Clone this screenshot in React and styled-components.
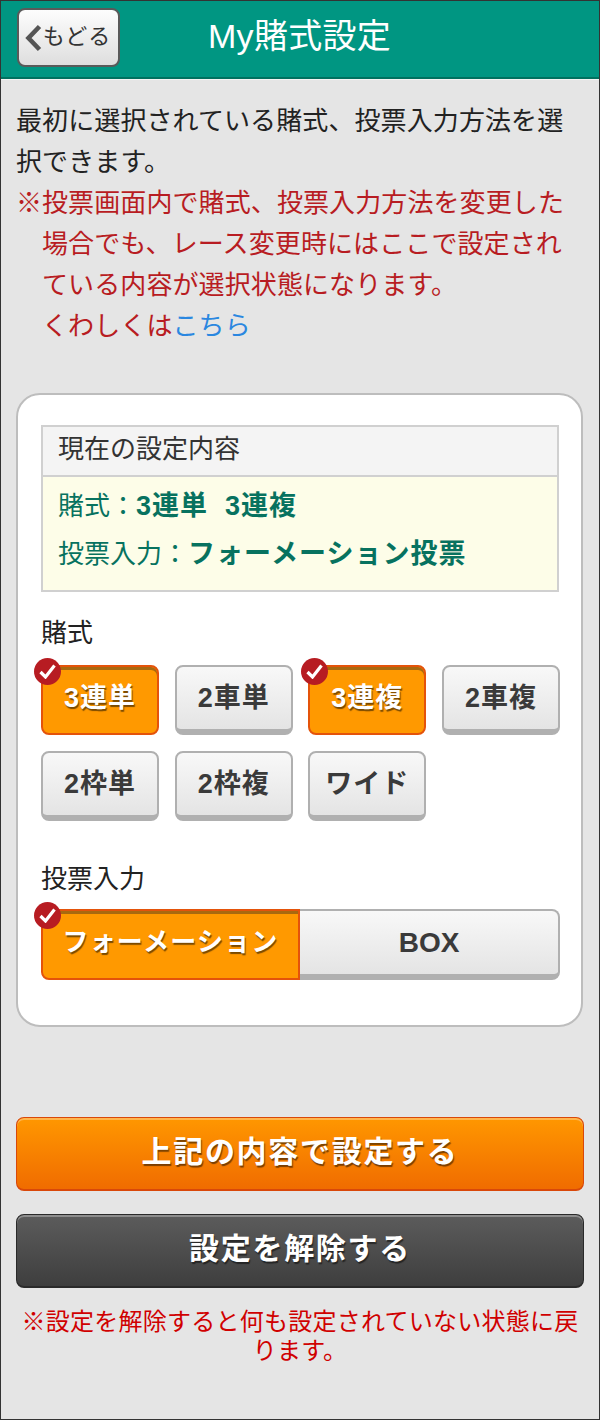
import styled, { createGlobalStyle } from "styled-components";

const GlobalStyle = createGlobalStyle`
  html, body {
    margin: 0;
    padding: 0;
    background: #e5e5e5;
  }
  * {
    box-sizing: border-box;
  }
`;

const FONT = `"Liberation Sans", "Noto Sans CJK JP", sans-serif`;

const Check = () => (
  <CheckBadge>
    <svg width="17" height="15" viewBox="0 0 17 15">
      <path d="M1.5 8 L6.5 13 L15.5 1.5" fill="none" stroke="#fff" strokeWidth="3.2" />
    </svg>
  </CheckBadge>
);

const App = () => {
  const row1 = [
    { label: "3連単", on: true },
    { label: "2車単" },
    { label: "3連複", on: true },
    { label: "2車複" },
  ];
  const row2 = [{ label: "2枠単" }, { label: "2枠複" }, { label: "ワイド" }];

  return (
    <>
      <GlobalStyle />
      <Page>
        <Header>
          <BackButton>
            <BackChevron width="18" height="28" viewBox="0 0 18 28">
              <path d="M15.5 2.5 L4.5 14 L15.5 25.5" fill="none" stroke="#555" strokeWidth="4.6" />
            </BackChevron>
            もどる
          </BackButton>
          <Title>My賭式設定</Title>
        </Header>

        <Intro>
          <Lead>最初に選択されている賭式、投票入力方法を選択できます。</Lead>
          <Warning>
            <Mark>※</Mark>
            <span>
              投票画面内で賭式、投票入力方法を変更した場合でも、レース変更時にはここで設定されている内容が選択状態になります。
              <br />
              くわしくは<MoreLink>こちら</MoreLink>
            </span>
          </Warning>
        </Intro>

        <Card>
          <Current>
            <CurrentHead>現在の設定内容</CurrentHead>
            <CurrentBody>
              <CurrentRow>
                賭式：<strong>3連単&nbsp;&nbsp;3連複</strong>
              </CurrentRow>
              <CurrentRow>
                投票入力：<strong>フォーメーション投票</strong>
              </CurrentRow>
            </CurrentBody>
          </Current>

          <SectionLabel>賭式</SectionLabel>
          <ChoiceGrid>
            {row1.concat(row2).map((item) => (
              <Choice key={item.label} $on={item.on}>
                {item.on && <Check />}
                {item.label}
              </Choice>
            ))}
          </ChoiceGrid>

          <InputLabel>投票入力</InputLabel>
          <Segment>
            <SegmentButton $on $side="left">
              <Check />
              フォーメーション
            </SegmentButton>
            <SegmentButton $side="right">BOX</SegmentButton>
          </Segment>
        </Card>

        <Actions>
          <ActionButton $kind="save">上記の内容で設定する</ActionButton>
          <ActionButton $kind="clear">設定を解除する</ActionButton>
          <Notice>※設定を解除すると何も設定されていない状態に戻ります。</Notice>
        </Actions>
      </Page>
    </>
  );
};

const Page = styled.div`
  width: 600px;
  height: 1420px;
  overflow: hidden;
  background: #e5e5e5;
  border: 1px solid #333;
  font-family: ${FONT};
  color: #333;
`;

const Header = styled.header`
  display: flex;
  align-items: center;
  height: 78px;
  padding: 0 0 3px 16px;
  background: #009682;
  border-bottom: 2px solid #00715f;
  box-shadow: 0 1px 0 #f4f4f4;
`;

const BackButton = styled.button`
  display: flex;
  align-items: center;
  justify-content: center;
  width: 103px;
  height: 59px;
  padding: 0 0 7px;
  border: 2px solid #5a5a5a;
  border-radius: 8px;
  background: linear-gradient(#fdfdfd, #dedede);
  color: #333;
  font-family: ${FONT};
  font-size: 22px;
  letter-spacing: 1px;
`;

const BackChevron = styled.svg`
  margin: 8px 1px 0 -2px;
`;

const Title = styled.h1`
  margin: -4px 0 0 88px;
  color: #fff;
  font-size: 34px;
  font-weight: 400;
  letter-spacing: 0.3px;
  line-height: 40px;
`;

const Intro = styled.div`
  padding: 22px 15px 0;
  font-size: 26px;
  letter-spacing: 0.1px;
  line-height: 41px;
`;

const Lead = styled.p`
  margin: 0;
  color: #222;
`;

const Warning = styled.div`
  display: flex;
  color: #b81c22;
`;

const Mark = styled.span`
  flex: none;
  width: 26px;
`;

const MoreLink = styled.a`
  color: #2a87e0;
`;

const Card = styled.section`
  width: 567px;
  height: 634px;
  margin: 46px 0 0 15px;
  padding: 30px 22px 0 23px;
  background: #fff;
  border: 2px solid #bdbdbd;
  border-radius: 24px;
`;

const Current = styled.div`
  border: 2px solid #d0d0d0;
`;

const CurrentHead = styled.div`
  height: 50px;
  padding-left: 15px;
  background: #f4f4f4;
  border-bottom: 2px solid #d0d0d0;
  font-size: 26px;
  line-height: 44px;
`;

const CurrentBody = styled.div`
  height: 113px;
  padding: 5px 15px 0;
  background: #fdfde8;
  color: #07725f;
`;

const CurrentRow = styled.div`
  font-size: 26px;
  line-height: 48px;
  white-space: nowrap;

  strong {
    font-size: 27px;
    font-weight: 700;
    letter-spacing: 1px;
  }
`;

const SectionLabel = styled.div`
  margin-top: 23px;
  color: #222;
  font-size: 26px;
  line-height: 36px;
`;

const InputLabel = styled(SectionLabel)`
  margin-top: 40px;
`;

const ChoiceGrid = styled.div`
  display: grid;
  grid-template-columns: repeat(4, 118px);
  grid-auto-rows: 70px;
  column-gap: 15.67px;
  row-gap: 16px;
  margin-top: 14px;
`;

const Choice = styled.button`
  position: relative;
  display: flex;
  align-items: center;
  justify-content: center;
  padding: 0 0 ${({ $on }) => ($on ? "10px" : "5px")};
  border-radius: 8px;
  border: 2px solid ${({ $on }) => ($on ? "#e4530a" : "#b0b0b0")};
  border-bottom-width: ${({ $on }) => ($on ? "2px" : "6px")};
  background: ${({ $on }) => ($on ? "#ff9900" : "linear-gradient(#f8f8f8, #e4e4e4)")};
  box-shadow: ${({ $on }) => ($on ? "inset 0 3px 0 #a8690f" : "none")};
  color: ${({ $on }) => ($on ? "#fff" : "#3a3a3a")};
  font-family: ${FONT};
  font-size: 27px;
  font-weight: 700;
  letter-spacing: 1px;
  text-shadow: ${({ $on }) => ($on ? "1px 2px 1px #7a4a00" : "none")};
`;

const Segment = styled.div`
  display: grid;
  grid-template-columns: 259px 260px;
  height: 71px;
  margin-top: 12px;
`;

const SegmentButton = styled(Choice)`
  padding-bottom: ${({ $on }) => ($on ? "10px" : "0")};
  border-radius: ${({ $side }) => ($side === "left" ? "8px 0 0 8px" : "0 8px 8px 0")};
  border-left-width: ${({ $side }) => ($side === "left" ? "2px" : "0")};
  letter-spacing: ${({ $on }) => ($on ? "1.2px" : "0")};
  font-size: ${({ $on }) => ($on ? "26px" : "28px")};
`;

const CheckBadge = styled.span`
  position: absolute;
  top: -9px;
  left: -9px;
  display: flex;
  align-items: center;
  justify-content: center;
  width: 27px;
  height: 27px;
  border-radius: 50%;
  background: #b71c22;
`;

const Actions = styled.div`
  display: flex;
  flex-direction: column;
  margin-top: 90px;
  padding: 0 15px;
`;

const ActionButton = styled.button`
  width: 568px;
  height: 74px;
  margin-bottom: 23px;
  padding: 0 0 10px;
  border-radius: 8px;
  border: 1px solid ${({ $kind }) => ($kind === "save" ? "#d9480a" : "#2a2a2a")};
  border-bottom-width: 2px;
  background: ${({ $kind }) =>
    $kind === "save"
      ? "linear-gradient(#ff9700, #f06c00)"
      : "linear-gradient(#5c5c5c, #3e3e3e)"};
  box-shadow: inset 0 2px 0 rgba(255, 255, 255, 0.3);
  color: #fff;
  font-family: ${FONT};
  font-size: 30px;
  font-weight: 700;
  letter-spacing: 1.7px;
  text-shadow: 1px 2px 1px rgba(0, 0, 0, 0.5);
`;

const Notice = styled.p`
  margin: -4px 0 0;
  padding: 0 3px;
  color: #d00000;
  font-size: 24px;
  letter-spacing: 0.25px;
  line-height: 29px;
  text-align: center;
`;

export default App;
